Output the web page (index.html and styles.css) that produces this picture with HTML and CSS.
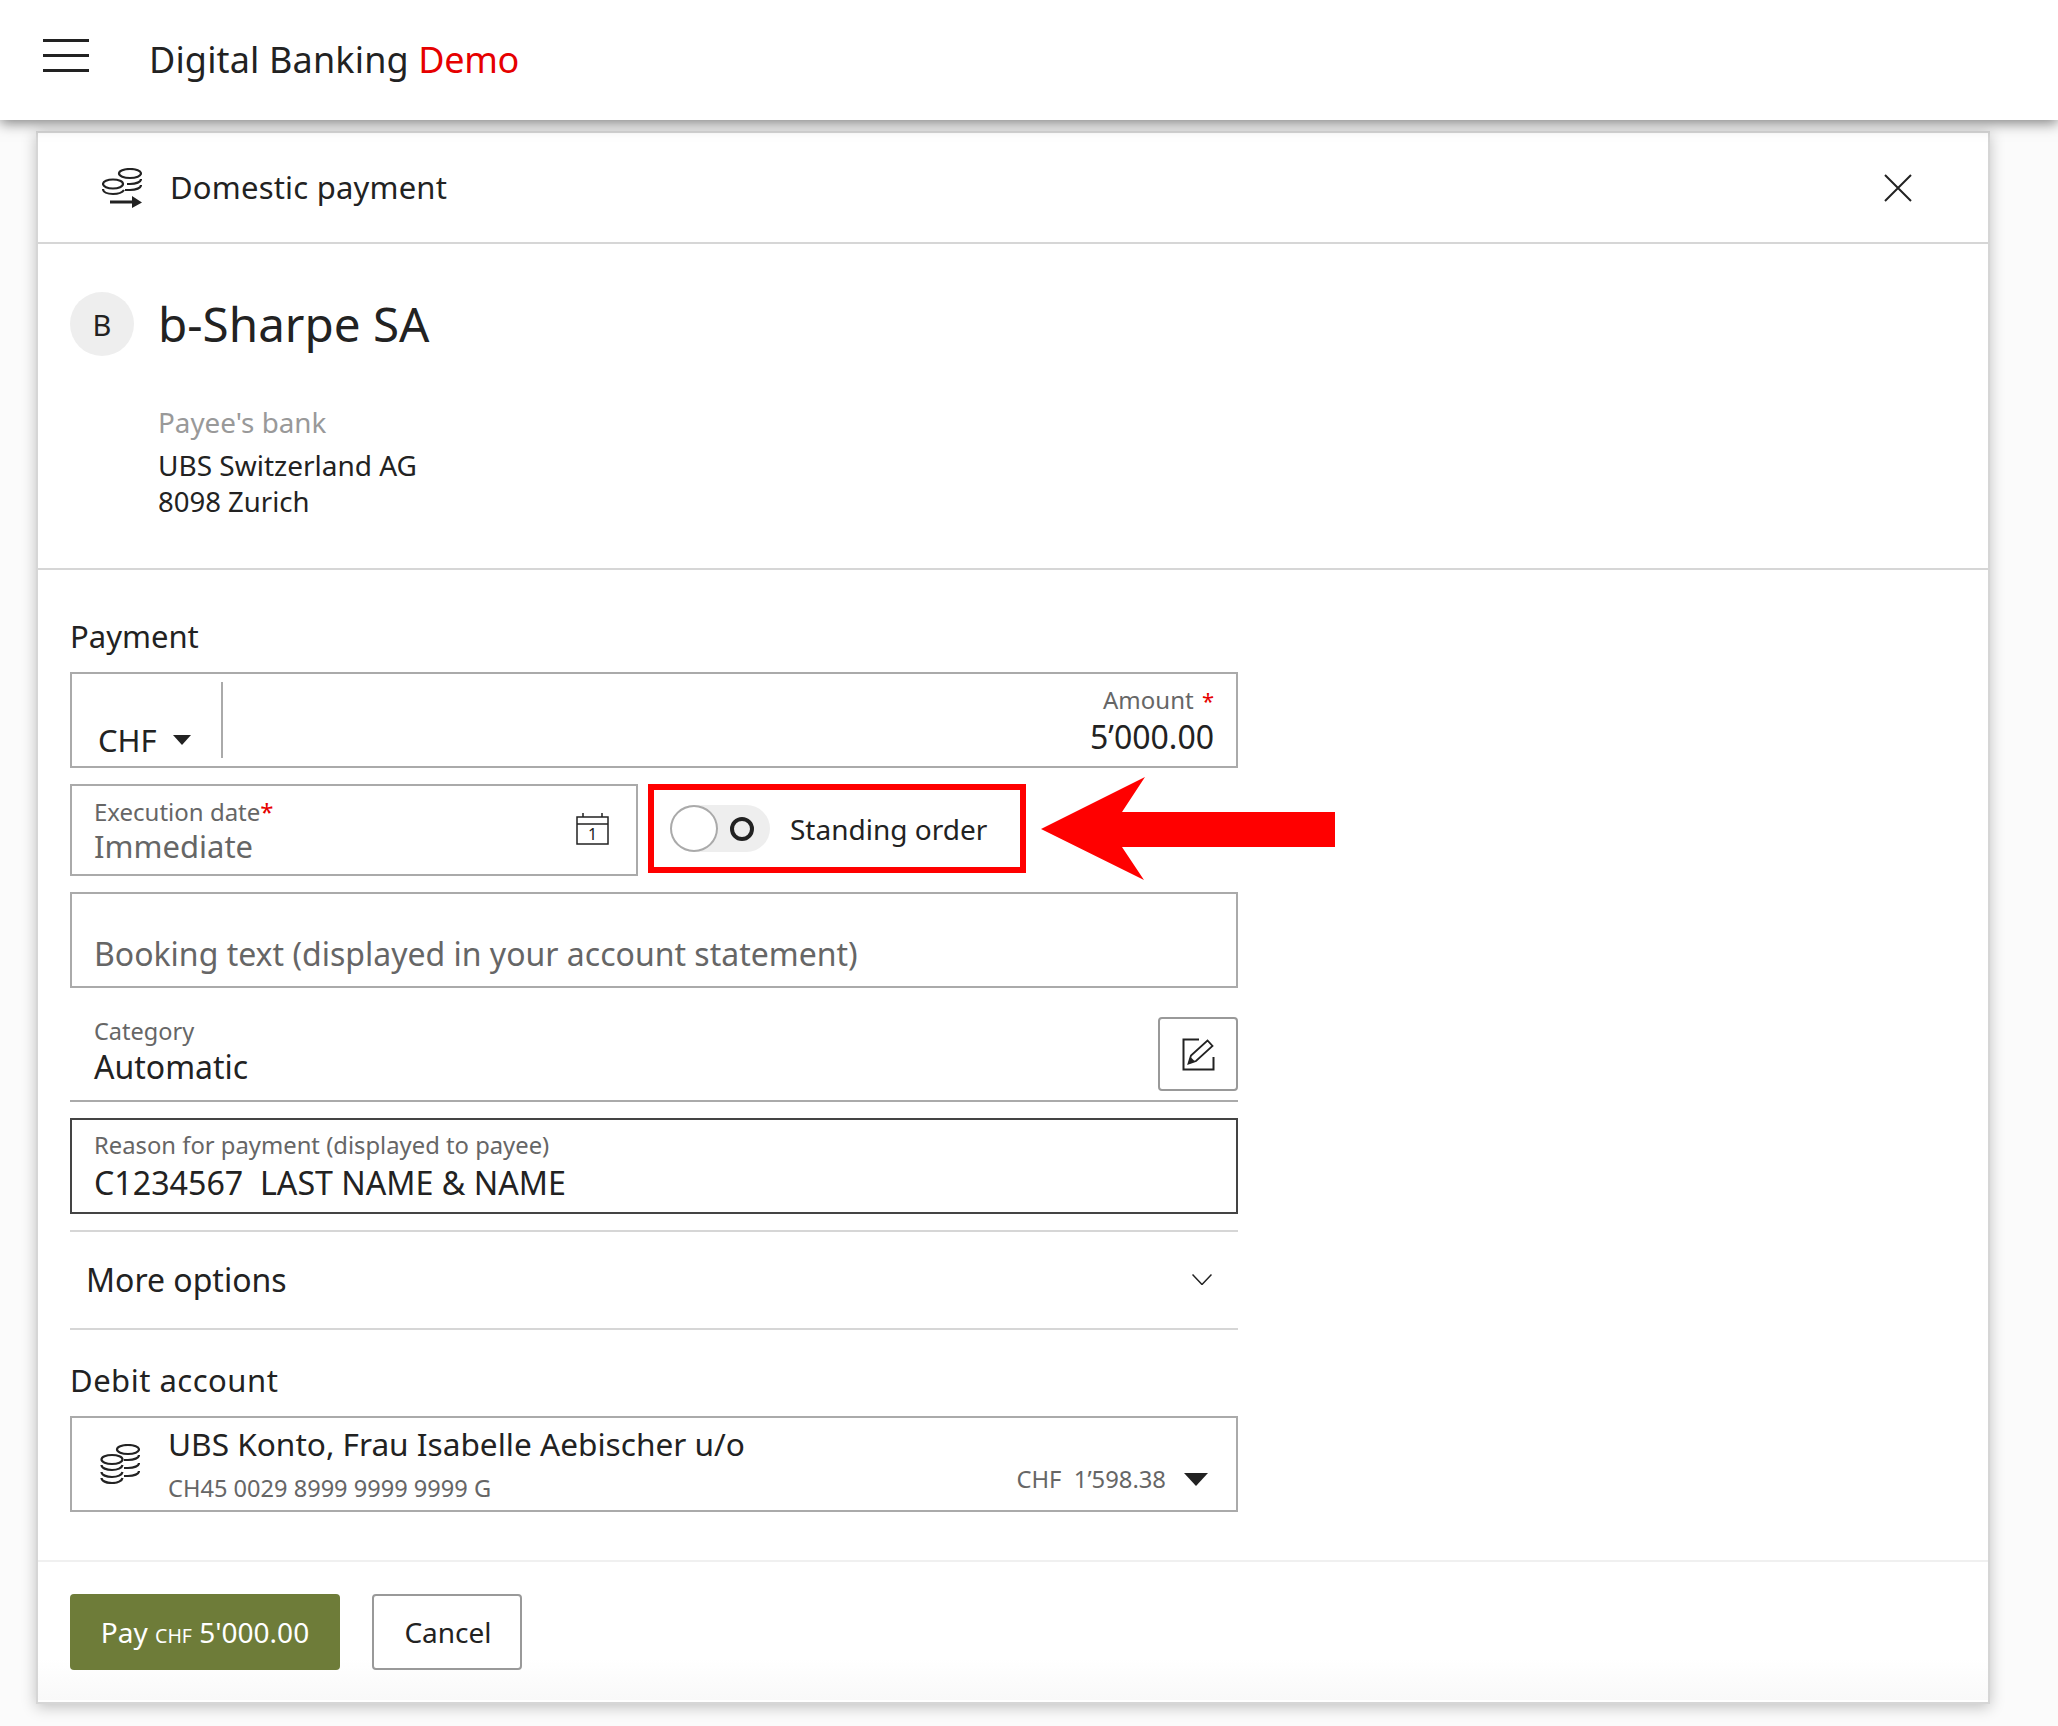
FILE: index.html
```html
<!DOCTYPE html>
<html lang="en">
<head>
<meta charset="utf-8">
<title>Digital Banking Demo</title>
<link rel="stylesheet" href="styles.css">
</head>
<body>
<header class="topbar">
  <button class="burger" aria-label="Menu"><span></span><span></span><span></span></button>
  <h1 class="brand">Digital Banking <em>Demo</em></h1>
</header>
<main class="panel">
  <div class="panel-head">
    <svg class="coins-arrow" viewBox="0 0 40 40" width="40" height="40" aria-hidden="true">
      <g fill="none" stroke="#222" stroke-width="2.200">
        <ellipse cx="28" cy="5.500" rx="11" ry="4.500"/>
        <ellipse cx="11" cy="16" rx="10" ry="4.500"/>
        <path d="M39 11c0 3-5 5-11 5h-3"/>
        <path d="M39 17c0 3-5 5-11 5h-5"/>
        <path d="M1 21c0 3 4 5 10 5s9-1 11-4"/>
      </g>
      <path fill="#222" d="M8 32.500h22V28l10 6.500L30 40v-4.500H8z"/>
    </svg>
    <h2 class="panel-title">Domestic payment</h2>
    <svg class="close" viewBox="0 0 28 28" width="28" height="28" aria-hidden="true"><path d="M1 1l26 26M27 1L1 27" fill="none" stroke="#222" stroke-width="2"/></svg>
  </div>
  <section class="payee">
    <div class="payee-top">
      <div class="avatar">B</div>
      <div class="payee-name">b-Sharpe SA</div>
    </div>
    <div class="bank-label">Payee's bank</div>
    <div class="bank-line">UBS Switzerland AG</div>
    <div class="bank-line">8098 Zurich</div>
  </section>
  <section class="form">
    <div class="section-label label-payment">Payment</div>
    <div class="field amount-field">
      <div class="currency"><span>CHF</span><i class="tri tri-sm"></i></div>
      <div class="amount">
        <div class="field-label">Amount <b class="req">*</b></div>
        <div class="amount-value">5’000.00</div>
      </div>
    </div>
    <div class="date-row">
      <div class="field date-field">
        <div class="date-text">
          <div class="field-label">Execution date<b class="req">*</b></div>
          <div class="field-value muted">Immediate</div>
        </div>
        <svg class="calendar" viewBox="0 0 33 32" width="33" height="32" aria-hidden="true">
          <g fill="none" stroke="#222" stroke-width="1.500">
            <rect x="1" y="4" width="31" height="27"/>
            <path d="M1 11h31M7 0v4M26 0v4"/>
          </g>
          <text x="16.500" y="27" class="cal-day">1</text>
        </svg>
      </div>
      <div class="standing">
        <div class="toggle"><span class="knob"></span><span class="toggle-o"></span></div>
        <span class="standing-label">Standing order</span>
      </div>
      <svg class="big-arrow" viewBox="0 0 294 103" width="294" height="103" aria-hidden="true"><path fill="#f00" d="M0 52L104 0 81 35H294V70H81L103 103z"/></svg>
    </div>
    <div class="field booking">Booking text (displayed in your account statement)</div>
    <div class="category">
      <div>
        <div class="field-label">Category</div>
        <div class="field-value">Automatic</div>
      </div>
      <button class="edit" aria-label="Edit">
        <svg viewBox="0 0 33 33" width="33" height="33" aria-hidden="true">
          <path d="M17 1.500H1.500v30h30V19" fill="none" stroke="#222" stroke-width="2"/>
          <path d="M6.500 25.500L9 17.500 25.500 2.500l5 5.500L14 23z" fill="none" stroke="#222" stroke-width="1.800"/>
          <path d="M6 26l2.500-7 4.500 4.500z" fill="#222"/>
        </svg>
      </button>
    </div>
    <div class="field reason">
      <div class="field-label reason-label">Reason for payment (displayed to payee)</div>
      <div class="reason-value">C1234567&nbsp; LAST NAME &amp; NAME</div>
    </div>
    <div class="more">
      <span>More options</span>
      <svg viewBox="0 0 20 11" width="20" height="11" aria-hidden="true"><path d="M.5.500l9.500 10 9.500-10" fill="none" stroke="#222" stroke-width="1.500"/></svg>
    </div>
    <div class="section-label label-debit">Debit account</div>
    <div class="field debit">
      <svg class="coins" viewBox="0 0 40 40" width="40" height="40" aria-hidden="true">
        <g fill="none" stroke="#222" stroke-width="2.200">
          <ellipse cx="28" cy="5.500" rx="11" ry="4.500"/>
          <ellipse cx="12" cy="15.500" rx="10.500" ry="4.500"/>
          <path d="M39 11c0 3-5 5-11 5h-4"/>
          <path d="M39 19c0 3-5 5-11 5h-4"/>
          <path d="M39 27c0 3-5 5-11 5h-4"/>
          <path d="M1.500 21c0 3 5 5 10.500 5s10-2 10.500-5"/>
          <path d="M1.500 28c0 3 5 5 10.500 5s10-2 10.500-5"/>
          <path d="M1.500 34c0 3 5 5 10.500 5s10-2 10.500-5"/>
        </g>
      </svg>
      <div class="debit-text">
        <div class="debit-name">UBS Konto, Frau Isabelle Aebischer u/o</div>
        <div class="debit-iban">CH45 0029 8999 9999 9999 G</div>
      </div>
      <div class="balance"><span>CHF&nbsp; 1’598.38</span><i class="tri tri-lg"></i></div>
    </div>
  </section>
  <footer class="actions">
    <button class="btn btn-pay">Pay <small>CHF</small> 5'000.00</button>
    <button class="btn btn-cancel">Cancel</button>
  </footer>
</main>
</body>
</html>
```
FILE: styles.css
```css
* { box-sizing: border-box; }
html, body { margin: 0; padding: 0; }
body {
  width: 2058px;
  height: 1726px;
  overflow: hidden;
  background: #fbfbfb;
  color: #222;
  font-family: "Noto Sans", "Open Sans", sans-serif;
}
button { font-family: inherit; padding: 0; }

.topbar {
  position: relative;
  z-index: 2;
  height: 120px;
  background: #fff;
  display: flex;
  align-items: center;
  padding-left: 43px;
  box-shadow: 0 3px 13px rgba(0,0,0,.5);
}
.burger {
  width: 46px;
  height: 33px;
  margin: 0 60px 10px 0;
  background: none;
  border: 0;
  display: flex;
  flex-direction: column;
  justify-content: space-between;
}
.burger span { display: block; height: 3px; width: 100%; background: #222; }
.brand { margin: 0; font-size: 36px; font-weight: 400; line-height: 44px; letter-spacing: .15px; }
.brand em { font-style: normal; color: #e60000; letter-spacing: -.4px; }

.panel {
  margin: 11px 0 0 36px;
  width: 1954px;
  height: 1573px;
  background: #fff;
  border: 2px solid #d6d6d6;
  box-shadow: 0 3px 14px rgba(0,0,0,.24);
}
.panel-head {
  height: 111px;
  border-bottom: 2px solid #d6d6d6;
  display: flex;
  align-items: center;
  padding: 0 76px 0 64px;
}
.coins-arrow { margin-right: 28px; }
.panel-title { margin: 0 0 2px; font-size: 31px; font-weight: 400; line-height: 40px; letter-spacing: .2px; flex: 1; }

.payee {
  height: 326px;
  border-bottom: 2px solid #d6d6d6;
  padding: 48px 32px 0;
}
.payee-top { display: flex; align-items: center; height: 64px; }
.avatar {
  width: 64px;
  height: 64px;
  border-radius: 50%;
  background: #eee;
  display: flex;
  align-items: center;
  justify-content: center;
  font-size: 29px;
  margin-right: 24px;
}
.payee-name { font-size: 47.6px; line-height: 64px; }
.bank-label { margin: 48px 0 0 88px; font-size: 27.8px; line-height: 37px; color: #999; }
.bank-label + .bank-line { margin-top: 6px; }
.bank-line { margin-left: 88px; font-size: 28px; line-height: 37px; }
.bank-line + .bank-line { margin-top: -1px; font-size: 27.5px; }

.form { padding: 0 0 0 32px; width: 1200px; }
.section-label { line-height: 40px; }
.label-payment { padding-top: 46px; height: 87px; font-size: 31px; }
.label-debit { margin-top: 30px; font-size: 31px; letter-spacing: .5px; }

.field { border: 2px solid #aaa; background: #fff; width: 1168px; }
.field-label { font-size: 24px; line-height: 34px; color: #666; }
.req { color: #e60000; font-weight: 400; }
.field-value { font-size: 32px; line-height: 36px; }
.muted { color: #666; font-size: 31px; margin-top: -1px; }

.amount-field { margin-top: 15px; height: 96px; display: flex; }
.currency {
  width: 151px;
  height: 76px;
  margin-top: 8px;
  padding: 41px 0 0 26px;
  border-right: 2px solid #aaa;
  display: flex;
  font-size: 31px;
  line-height: 34px;
}
.tri { display: block; width: 0; height: 0; border-style: solid; border-color: #222 transparent transparent; }
.tri-sm { border-width: 10px 9px 0; margin: 12px 0 0 16px; }
.amount { flex: 1; padding: 9px 22px 0 0; text-align: right; }
.amount .req { margin-left: 2px; font-size: 22px; }
.amount-value { font-size: 32px; line-height: 40px; }

.date-row { position: relative; margin-top: 16px; display: flex; align-items: flex-start; gap: 10px; }
.date-field {
  width: 568px;
  height: 92px;
  display: flex;
  justify-content: space-between;
  padding: 9px 27px 0 22px;
}
.calendar { margin-top: 18px; }
.cal-day { font: 16px "Noto Sans", sans-serif; fill: #222; text-anchor: middle; }
.standing {
  width: 378px;
  height: 89px;
  border: 6px solid #f00;
  display: flex;
  align-items: center;
  padding-left: 16px;
}
.toggle {
  position: relative;
  width: 100px;
  height: 47px;
  border-radius: 24px;
  background: #eee;
  margin-right: 20px;
}
.knob {
  position: absolute;
  left: 0;
  top: 0;
  width: 48px;
  height: 47px;
  border-radius: 50%;
  background: #fff;
  border: 2px solid #aaa;
}
.toggle-o {
  position: absolute;
  left: 60px;
  top: 12px;
  width: 24px;
  height: 24px;
  border-radius: 50%;
  border: 4px solid #222;
}
.standing-label { font-size: 28px; line-height: 40px; padding-top: 1px; }
.big-arrow { position: absolute; left: 971px; top: -7px; }

.booking {
  margin-top: 16px;
  height: 96px;
  padding: 40px 0 0 22px;
  font-size: 32px;
  line-height: 40px;
  color: #666;
}
.category {
  width: 1168px;
  height: 114px;
  border-bottom: 2px solid #aaa;
  display: flex;
  justify-content: space-between;
  align-items: flex-start;
  padding-left: 24px;
  padding-top: 27px;
}
.category .field-label { line-height: 33px; font-size: 23.5px; padding-top: 0; }
.category .field-value { padding-top: 1px; }
.edit {
  width: 80px;
  height: 74px;
  margin-top: 2px;
  background: #fff;
  border: 2px solid #999;
  border-radius: 4px;
  display: flex;
  align-items: center;
  justify-content: center;
}
.reason { margin-top: 16px; height: 96px; border-color: #444; padding: 7px 0 0 22px; }
.reason-label { line-height: 36px; font-size: 23.8px; }
.reason-value { font-size: 32.2px; line-height: 40px; }
.more {
  width: 1168px;
  height: 100px;
  margin-top: 16px;
  border-top: 2px solid #d6d6d6;
  border-bottom: 2px solid #d6d6d6;
  display: flex;
  justify-content: space-between;
  align-items: center;
  padding: 0 26px 2px 16px;
  font-size: 32px;
}
.debit { margin-top: 16px; height: 96px; display: flex; align-items: flex-start; }
.coins { margin: 26px 28px 0 28px; }
.debit-text { padding-top: 6px; flex: 1; }
.debit-name { font-size: 31.6px; line-height: 40px; }
.debit-iban { margin-top: 9px; font-size: 23.6px; line-height: 30px; color: #666; }
.balance {
  display: flex;
  align-items: center;
  height: 30px;
  margin: 46px 28px 0 0;
  font-size: 23.8px;
  line-height: 30px;
  color: #666;
}
.tri-lg { border-width: 13px 12px 0; margin-left: 18px; }

.actions {
  margin-top: 48px;
  height: 140px;
  border-top: 2px solid #f0f0f0;
  padding: 32px 32px 0;
  display: flex;
  gap: 32px;
  background: linear-gradient(#fff 70%, #f9f9f9);
}
.btn { height: 76px; border-radius: 4px; font-size: 28px; }
.btn-pay { width: 270px; background: #6e7c39; color: #fff; border: 0; }
.btn-pay small { font-size: 19.5px; }
.btn-cancel { width: 150px; padding-left: 2px; background: #fff; color: #222; border: 2px solid #999; }
```
